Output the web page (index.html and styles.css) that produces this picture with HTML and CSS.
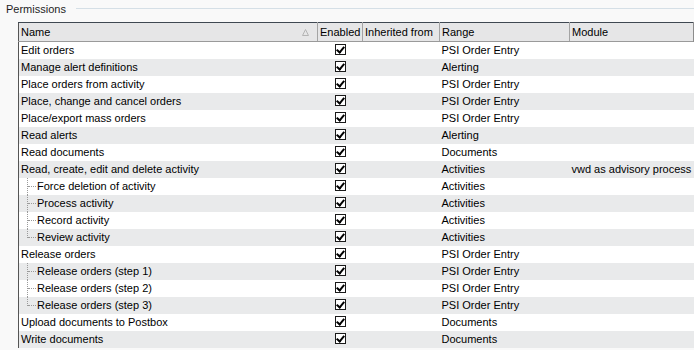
FILE: index.html
```html
<!DOCTYPE html>
<html lang="en">
<head>
    <title>Permissions</title>
    <link rel="stylesheet" href="styles.css">
</head>
<body>
    <div class="group">
        <div class="legend">
            <span class="label">Permissions</span>
            <span class="rule"></span>
        </div>

        <table class="grid">
            <colgroup>
                <col class="c-name">
                <col class="c-enabled">
                <col class="c-inherited">
                <col class="c-range">
                <col class="c-module">
            </colgroup>
            <thead>
                <tr>
                    <th class="sorted">Name
                        <svg class="sort" width="7" height="7" viewBox="0 0 7 7"><path d="M3.5 0.5 L6.5 6.5 L0.5 6.5 Z" fill="none" stroke="#b4b4b4" stroke-width="1"/></svg>
                    </th>
                    <th>Enabled</th>
                    <th>Inherited from</th>
                    <th>Range</th>
                    <th>Module</th>
                </tr>
            </thead>
            <tbody>
                <tr><td>Edit orders</td><td class="check"><span class="box"></span></td><td></td><td>PSI Order Entry</td><td></td></tr>
                <tr><td>Manage alert definitions</td><td class="check"><span class="box"></span></td><td></td><td>Alerting</td><td></td></tr>
                <tr><td>Place orders from activity</td><td class="check"><span class="box"></span></td><td></td><td>PSI Order Entry</td><td></td></tr>
                <tr><td>Place, change and cancel orders</td><td class="check"><span class="box"></span></td><td></td><td>PSI Order Entry</td><td></td></tr>
                <tr><td>Place/export mass orders</td><td class="check"><span class="box"></span></td><td></td><td>PSI Order Entry</td><td></td></tr>
                <tr><td>Read alerts</td><td class="check"><span class="box"></span></td><td></td><td>Alerting</td><td></td></tr>
                <tr><td>Read documents</td><td class="check"><span class="box"></span></td><td></td><td>Documents</td><td></td></tr>
                <tr><td>Read, create, edit and delete activity</td><td class="check"><span class="box"></span></td><td></td><td>Activities</td><td>vwd as advisory process</td></tr>
                <tr><td class="child"><span class="branch"></span>Force deletion of activity</td><td class="check"><span class="box"></span></td><td></td><td>Activities</td><td></td></tr>
                <tr><td class="child"><span class="branch"></span>Process activity</td><td class="check"><span class="box"></span></td><td></td><td>Activities</td><td></td></tr>
                <tr><td class="child"><span class="branch"></span>Record activity</td><td class="check"><span class="box"></span></td><td></td><td>Activities</td><td></td></tr>
                <tr><td class="child"><span class="branch last"></span>Review activity</td><td class="check"><span class="box"></span></td><td></td><td>Activities</td><td></td></tr>
                <tr><td>Release orders</td><td class="check"><span class="box"></span></td><td></td><td>PSI Order Entry</td><td></td></tr>
                <tr><td class="child"><span class="branch"></span>Release orders (step 1)</td><td class="check"><span class="box"></span></td><td></td><td>PSI Order Entry</td><td></td></tr>
                <tr><td class="child"><span class="branch"></span>Release orders (step 2)</td><td class="check"><span class="box"></span></td><td></td><td>PSI Order Entry</td><td></td></tr>
                <tr><td class="child"><span class="branch last"></span>Release orders (step 3)</td><td class="check"><span class="box"></span></td><td></td><td>PSI Order Entry</td><td></td></tr>
                <tr><td>Upload documents to Postbox</td><td class="check"><span class="box"></span></td><td></td><td>Documents</td><td></td></tr>
                <tr><td>Write documents</td><td class="check"><span class="box"></span></td><td></td><td>Documents</td><td></td></tr>
            </tbody>
        </table>
    </div>
</body>
</html>
```

FILE: styles.css
```css
* {
    margin: 0;
    padding: 0;
    box-sizing: border-box;
}

body {
    background: #f9f9f9;
    font-family: 'Liberation Sans', Arial, sans-serif;
    font-size: 11px;
    color: #000;
    overflow: hidden;
}

.group {
    padding: 2px 0 0 6px;
}

.legend {
    display: flex;
    align-items: center;
    height: 13px;
}

.label {
    color: #1e1e1e;
}

.rule {
    flex: 1;
    height: 1px;
    margin-left: 10px;
    background: #d5dfe6;
}

.grid {
    margin: 7px 0 0 12px;
    width: 675px;
    border-collapse: collapse;
    table-layout: fixed;
    background: #fff;
    border-left: 1px solid #555;
}

.c-name { width: 299px; }
.c-enabled { width: 45px; }
.c-inherited { width: 77px; }
.c-range { width: 130px; }
.c-module { width: 124px; }

th {
    height: 19px;
    background: #e6e6e7;
    border-top: 1px solid #3f4852;
    border-bottom: 1px solid #9a9a9a;
    border-right: 1px solid #a4a4a4;
    font-weight: normal;
    text-align: left;
    padding: 0 2px;
    white-space: nowrap;
}

th:last-child {
    border-right: 2px solid #8c8c8c;
}

.sorted {
    position: relative;
}

.sort {
    position: absolute;
    right: 8px;
    top: 6px;
}

td {
    height: 17px;
    padding: 0 2px;
    white-space: nowrap;
    overflow: hidden;
    line-height: 17px;
}

tbody tr:nth-child(even) td {
    background: #e9eaeb;
}

.check {
    text-align: center;
    padding: 0;
}

.box {
    display: inline-block;
    width: 11px;
    height: 11px;
    border: 1px solid #1a1a1a;
    background: #fff;
    vertical-align: -1px;
    position: relative;
}

.box::after {
    content: "";
    position: absolute;
    left: 2px;
    top: 0px;
    width: 3px;
    height: 6px;
    border-right: 2px solid #000;
    border-bottom: 2px solid #000;
    transform: rotate(40deg);
}

.child {
    padding-left: 8px;
}

.branch {
    display: inline-block;
    position: relative;
    width: 10px;
    height: 17px;
    vertical-align: top;
    border-left: 1px dotted #9a9a9a;
}

.branch.last {
    height: 9px;
}

.branch::after {
    content: "";
    position: absolute;
    left: 0;
    top: 8px;
    width: 8px;
    border-top: 1px dotted #9a9a9a;
}
```
